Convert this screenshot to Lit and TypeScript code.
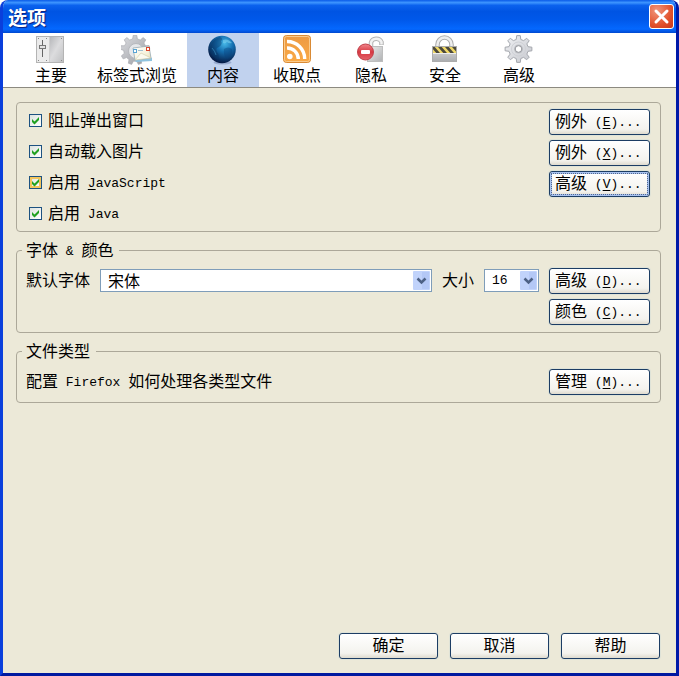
import { LitElement, html, css, svg, nothing } from "lit";
import { customElement, property, state } from "lit/decorators.js";
import { classMap } from "lit/directives/class-map.js";

const gear = (cx: number, cy: number, outer: number, inner: number, teeth: number) => {
  const pts: string[] = [];
  const step = (Math.PI * 2) / teeth;
  for (let i = 0; i < teeth; i++) {
    const a = i * step - Math.PI / 2;
    for (const [r, o] of [[inner, -0.3], [outer, -0.17], [outer, 0.17], [inner, 0.3]]) {
      pts.push(`${(cx + r * Math.cos(a + o * step)).toFixed(2)},${(cy + r * Math.sin(a + o * step)).toFixed(2)}`);
    }
  }
  return pts.join(" ");
};

const icons: Record<string, unknown> = {
  main: svg`
    <defs><linearGradient id="m" x1="0" y1="0" x2="1" y2="1">
      <stop offset="0" stop-color="#b4b5b8"/><stop offset=".5" stop-color="#dcdcde"/><stop offset="1" stop-color="#c0c1c3"/>
    </linearGradient></defs>
    <rect x="1.500" y="1.500" width="27" height="26" fill="#ebebeb" stroke="#b4b4b4"/>
    <rect x="14" y="2" width="14" height="25" fill="url(#m)"/>
    <path d="M14.500 2V27" stroke="#cfcfcf"/>
    <path d="M7.500 5V22" stroke="#666"/>
    <rect x="4.500" y="10.500" width="6" height="3" fill="#e2e2e2" stroke="#777"/>
    <path d="M3 3.500h1M3 25.500h1M11 3.500h1M11 25.500h1M26 3.500h1M26 25.500h1" stroke="#888"/>`,
  tabs: svg`
    <defs><linearGradient id="t" x1="0" y1="0" x2="1" y2="1">
      <stop offset="0" stop-color="#dcdde1"/><stop offset="1" stop-color="#989aa0"/>
    </linearGradient>
    <linearGradient id="e" x1="0" y1="0" x2="1" y2="1">
      <stop offset="0" stop-color="#ffffff"/><stop offset=".6" stop-color="#f6f3de"/><stop offset="1" stop-color="#e6dfb4"/>
    </linearGradient></defs>
    <polygon points=${gear(14, 15, 14.8, 11.3, 9)} fill="url(#t)" stroke="#aaacb1" stroke-width=".7"/>
    <circle cx="15" cy="16" r="7.500" fill="#e6e8eb" stroke="#b6b8bd"/>
    <path d="M13 24L29 22L31 23V26L15 27Z" fill="#8fc3df"/>
    <path d="M12 13L28 11L30 23L14 25Z" fill="url(#e)" stroke="#98a9b3" stroke-width=".8"/>
    <path d="M14 25L20 18L30 23Z" fill="#fbfaf0" stroke="#cfcaa8" stroke-width=".6"/>
    <rect x="25.500" y="12.500" width="3" height="3" fill="#fff" stroke="#d8452e"/>
    <rect x="12.500" y="14.500" width="3" height="3" fill="#fff" stroke="#58a4d4"/>
    <path d="M17 15.500H22" stroke="#9dbfd2"/>`,
  content: svg`
    <defs><radialGradient id="g" cx=".6" cy=".28" r=".75">
      <stop offset="0" stop-color="#46b8e8"/><stop offset=".4" stop-color="#156fb0"/><stop offset="1" stop-color="#04143c"/>
    </radialGradient></defs>
    <ellipse cx="15.500" cy="27.500" rx="9" ry="2" fill="#7d93bd" opacity=".6"/>
    <circle cx="15" cy="14.500" r="13.800" fill="url(#g)"/>
    <path d="M4 10Q7 3 13 2Q17 4 14 6Q16 9 12 12Q8 13 10 17Q13 20 11 25Q4 22 3 15Z" fill="#083463" opacity=".4"/>
    <path d="M17 14Q21 11 25 14Q26 20 20 24Q16 20 17 14Z" fill="#0b427a" opacity=".4"/>
    <path d="M16 5Q21 3 25 8Q22 9 20 7Q18 9 16 8Z" fill="#7fd6f2" opacity=".55"/>
    <path d="M5 13Q8 16 9 20" stroke="#52b3e4" fill="none" opacity=".45"/>`,
  feeds: svg`
    <defs><linearGradient id="f" x1="0" y1="0" x2="0" y2="1">
      <stop offset="0" stop-color="#ed9a42"/><stop offset="1" stop-color="#faa945"/>
    </linearGradient></defs>
    <rect x="2.500" y=".5" width="27" height="27" rx="3" fill="url(#f)" stroke="#d98a35"/>
    <rect x="3.500" y="1.500" width="25" height="25" rx="2" fill="none" stroke="#fbcb8c"/>
    <circle cx="8.800" cy="21.500" r="2.800" fill="#fff"/>
    <path d="M6 13A11 11 0 0 1 17.300 24M6 6.500A17.500 17.500 0 0 1 23.700 24" fill="none" stroke="#fff" stroke-width="3.400"/>`,
  privacy: svg`
    <defs><linearGradient id="p" x1="0" y1="0" x2="1" y2="1">
      <stop offset="0" stop-color="#efefef"/><stop offset="1" stop-color="#afb1b3"/>
    </linearGradient>
    <linearGradient id="r" x1="0" y1="0" x2="0" y2="1">
      <stop offset="0" stop-color="#f0868b"/><stop offset=".5" stop-color="#d73842"/><stop offset="1" stop-color="#e4636a"/>
    </linearGradient></defs>
    <path d="M16 11V7.500A5.500 5 0 0 1 26.500 7V10" fill="none" stroke="#b4b4b4" stroke-width="4.500"/>
    <path d="M16 11V7.500A5.500 5 0 0 1 26.500 7V9.500" fill="none" stroke="#f2f2f2" stroke-width="2.500"/>
    <rect x="12.500" y="11.500" width="15" height="15" fill="url(#p)" stroke="#bdbdbd"/>
    <circle cx="10.500" cy="17" r="8" fill="url(#r)" stroke="#c1414a"/>
    <rect x="6" y="15" width="9" height="4" rx="1" fill="#fff"/>`,
  security: svg`
    <defs><linearGradient id="s" x1="0" y1="0" x2="0" y2="1">
      <stop offset="0" stop-color="#dedede"/><stop offset="1" stop-color="#aaacaf"/>
    </linearGradient><clipPath id="c"><rect x="4" y="12" width="23" height="6"/></clipPath></defs>
    <path d="M8.500 11V9.500A7 7 0 0 1 22.500 9.500V11" fill="none" stroke="#adadad" stroke-width="4.500"/>
    <path d="M8.500 11V9.500A7 7 0 0 1 22.500 9.500V11" fill="none" stroke="#eeeeee" stroke-width="2.500"/>
    <rect x="3.500" y="11.500" width="24" height="15" fill="url(#s)" stroke="#acacac"/>
    <g clip-path="url(#c)"><rect x="4" y="12" width="23" height="6" fill="#f0d968"/>
      <path d="M3 11L10 19M10 11L17 19M17 11L24 19M24 11L31 19" stroke="#4c493c" stroke-width="2.800"/></g>
    <path d="M4 18.500H27" stroke="#ededed"/>`,
  advanced: svg`
    <defs><linearGradient id="a" x1="0" y1="0" x2="1" y2="1">
      <stop offset="0" stop-color="#f0f1f4"/><stop offset="1" stop-color="#c6c8ce"/>
    </linearGradient></defs>
    <polygon points=${gear(15.5, 14, 13.5, 9.8, 8)} fill="url(#a)" stroke="#a4a7ad" stroke-linejoin="round"/>
    <circle cx="15.500" cy="14" r="7" fill="none" stroke="#cfd1d6"/>
    <circle cx="15.500" cy="14" r="4.500" fill="#bfc1c6"/>
    <circle cx="15.500" cy="14" r="3.300" fill="#fff" stroke="#97999f"/>`,
};

const textStyles = css`
  .en {
    font-family: "Liberation Mono", "Noto Sans CJK SC", monospace;
    font-size: 13px;
    line-height: 0;
    vertical-align: 1px;
    white-space: pre;
  }
  .key {
    text-decoration: underline;
    text-underline-offset: 2px;
  }
`;

@customElement("xp-button")
class XpButton extends LitElement {
  @property() label = "";
  @property() key = "";
  @property({ type: Boolean }) active = false;

  static styles = [
    textStyles,
    css`
      :host {
        display: block;
        width: 101px;
      }
      button {
        display: block;
        width: 100%;
        height: 26px;
        padding: 0 5px 4px;
        border: 1px solid #1c3d64;
        border-radius: 3px;
        background: linear-gradient(#ffffff, #f4f3ee 80%, #dfdbcf);
        box-shadow: 0 0 0 1px #dfe3d8;
        color: #000;
        font: 16px/20px "Noto Sans CJK SC", sans-serif;
        text-align: left;
        white-space: nowrap;
      }
      .plain {
        text-align: center;
      }
      .active {
        box-shadow: inset 0 0 0 2px #a9c3f0, 0 0 0 1px #dfe3d8;
        outline: 1px dotted #52688f;
        outline-offset: -3px;
      }
    `,
  ];

  render() {
    return html`<button type="button" class=${classMap({ active: this.active, plain: !this.key })}>${this.label}${
      this.key ? html`<span class="en"> (<span class="key">${this.key}</span>)...</span>` : nothing
    }</button>`;
  }
}

@customElement("xp-check")
class XpCheck extends LitElement {
  @property() label = "";
  @property() key = "";
  @property() rest = "";
  @property({ type: Boolean }) hot = false;

  static styles = [
    textStyles,
    css`
      label {
        display: flex;
        align-items: center;
        gap: 6px;
        padding-bottom: 2px;
        line-height: 20px;
      }
      .box {
        display: grid;
      }
      .text {
        padding-bottom: 3px;
      }
      input,
      svg {
        grid-area: 1 / 1;
        width: 13px;
        height: 13px;
        margin: 0;
      }
      input {
        appearance: none;
        box-sizing: border-box;
        border: 1px solid #1d5281;
        background: linear-gradient(135deg, #dde3df, #ffffff);
      }
      .hot {
        box-shadow: inset 0 0 0 2px #f3c55c;
      }
      svg {
        pointer-events: none;
        visibility: hidden;
      }
      input:checked + svg {
        visibility: visible;
      }
    `,
  ];

  render() {
    return html`<label>
      <span class="box">
        <input type="checkbox" class=${classMap({ hot: this.hot })} checked />
        <svg viewBox="0 0 13 13" aria-hidden="true"><path d="M3 5L5.500 7.500L10 3V6L5.500 10.500L3 8Z" fill="#21a121" /></svg>
      </span>
      <span class="text">${this.label}<span class="en">${this.rest ? " " : ""}<span class="key">${this.key}</span>${this.rest}</span></span>
    </label>`;
  }
}

@customElement("app-root")
class AppRoot extends LitElement {
  @state() private tab = "content";

  static styles = [
    textStyles,
    css`
      :host {
        display: block;
        background: #fff;
        color: #000;
        font: 16px/20px "Noto Sans CJK SC", sans-serif;
      }
      .window {
        box-sizing: border-box;
        min-height: 100vh;
        display: flex;
        flex-direction: column;
        border: 3px solid;
        border-top: 0;
        border-color: #0a3fdc #0019a8 #0019a0 #0a3fdc;
        border-radius: 8px 8px 0 0;
        background: #ece9d8;
        overflow: hidden;
      }
      .title {
        display: flex;
        align-items: center;
        justify-content: space-between;
        height: 33px;
        margin: 0 -3px;
        padding: 0 5px 0 8px;
        box-sizing: border-box;
        background: linear-gradient(#0a5be8, #3d95ff 8%, #0b62ee 16%, #0054e3 35%, #0058ea 60%, #0468ff 88%, #0359e8 94%, #0048cf);
      }
      h1 {
        margin: 0;
        color: #fff;
        font-size: 19px;
        font-weight: 700;
        text-shadow: 1px 1px 1px #0a1f7c;
      }
      .close {
        width: 25px;
        height: 25px;
        padding: 0;
        border: 1px solid #fff;
        border-radius: 3px;
        background: radial-gradient(circle at 30% 25%, #f0967c, #e2522c 60%, #c8381a);
      }
      .close svg {
        display: block;
      }
      nav {
        display: flex;
        gap: 2px;
        padding-left: 12px;
        background: #fff;
        border-bottom: 1px solid #8c8a80;
      }
      .tab {
        display: flex;
        flex-direction: column;
        align-items: center;
        min-width: 72px;
        height: 54px;
        padding: 2px 8px;
        border: 0;
        background: none;
        color: inherit;
        font: inherit;
      }
      .tab svg {
        width: 32px;
        height: 30px;
        flex: none;
      }
      .tab span {
        line-height: 18px;
      }
      .tab.on {
        background: #c1d2ee;
      }
      main {
        flex: 1;
        display: flex;
        flex-direction: column;
        gap: 8px;
        padding: 14px 15px 14px 13px;
      }
      fieldset {
        min-width: 0;
        margin: 0;
        padding: 5px 10px 5px 5px;
        border: 1px solid #aca899;
        border-radius: 4px;
      }
      .checks {
        padding: 3px 10px 1px 12px;
      }
      legend {
        height: 20px;
        padding: 0 6px 0 4px;
        line-height: 18px;
      }
      .row {
        display: flex;
        align-items: center;
        justify-content: space-between;
        gap: 10px;
        height: 31px;
      }
      .fonts .row,
      .types .row {
        padding-left: 4px;
      }
      .row > label,
      .row > span:first-child {
        padding-bottom: 3px;
      }
      .end {
        justify-content: flex-end;
      }
      .pick {
        display: grid;
        align-items: center;
      }
      .wide {
        flex: 1;
      }
      .size {
        width: 55px;
      }
      select {
        grid-area: 1 / 1;
        appearance: none;
        box-sizing: border-box;
        width: 100%;
        height: 23px;
        margin: 0;
        padding: 0 20px 2px 7px;
        border: 1px solid #7f9db9;
        border-radius: 0;
        background: #fff;
        color: #000;
        font: 16px/20px "Noto Sans CJK SC", sans-serif;
      }
      .size select {
        padding-bottom: 0;
        font-family: "Liberation Mono", monospace;
        font-size: 13px;
      }
      .pick svg {
        grid-area: 1 / 1;
        justify-self: end;
        margin-right: 2px;
        width: 17px;
        height: 19px;
        pointer-events: none;
      }
      footer {
        display: flex;
        justify-content: flex-end;
        gap: 12px;
        margin-top: auto;
        padding-right: 1px;
      }
      footer xp-button {
        width: 99px;
      }
    `,
  ];

  private tabs = [
    ["main", "主要"],
    ["tabs", "标签式浏览"],
    ["content", "内容"],
    ["feeds", "收取点"],
    ["privacy", "隐私"],
    ["security", "安全"],
    ["advanced", "高级"],
  ];

  private arrow() {
    return html`<svg viewBox="0 0 17 19" aria-hidden="true">
      <rect width="17" height="19" rx="1" fill="#c1d3fb" />
      <rect x="9" y="1" width="7" height="17" fill="#b4c8f6" />
      <path d="M4.500 7.500L8.500 11.500L12.500 7.500" fill="none" stroke="#4d6185" stroke-width="2.500" />
    </svg>`;
  }

  render() {
    return html`<div class="window">
      <header class="title">
        <h1>选项</h1>
        <button class="close" type="button" aria-label="关闭">
          <svg viewBox="0 0 23 23"><path d="M6 6L17 17M17 6L6 17" stroke="#fff" stroke-width="3" stroke-linecap="round" /></svg>
        </button>
      </header>
      <nav>
        ${this.tabs.map(
          ([id, label]) => html`<button
            type="button"
            class=${classMap({ tab: true, on: this.tab === id })}
            @click=${() => (this.tab = id)}
          ><svg viewBox="0 0 32 30" aria-hidden="true">${icons[id]}</svg><span>${label}</span></button>`
        )}
      </nav>
      <main>
        <fieldset class="checks" aria-label="内容">
          <div class="row"><xp-check label="阻止弹出窗口"></xp-check><xp-button label="例外" key="E"></xp-button></div>
          <div class="row"><xp-check label="自动载入图片"></xp-check><xp-button label="例外" key="X"></xp-button></div>
          <div class="row"><xp-check label="启用" key="J" rest="avaScript" hot></xp-check><xp-button label="高级" key="V" active></xp-button></div>
          <div class="row"><xp-check label="启用" rest="Java"></xp-check></div>
        </fieldset>
        <fieldset class="fonts">
          <legend>字体<span class="en"> &amp; </span>颜色</legend>
          <div class="row">
            <label for="font">默认字体</label>
            <span class="pick wide"><select id="font"><option>宋体</option></select>${this.arrow()}</span>
            <label for="size">大小</label>
            <span class="pick size"><select id="size"><option>16</option></select>${this.arrow()}</span>
            <xp-button label="高级" key="D"></xp-button>
          </div>
          <div class="row end"><xp-button label="颜色" key="C"></xp-button></div>
        </fieldset>
        <fieldset class="types">
          <legend>文件类型</legend>
          <div class="row">
            <span>配置<span class="en"> Firefox </span>如何处理各类型文件</span>
            <xp-button label="管理" key="M"></xp-button>
          </div>
        </fieldset>
        <footer>
          <xp-button label="确定"></xp-button>
          <xp-button label="取消"></xp-button>
          <xp-button label="帮助"></xp-button>
        </footer>
      </main>
    </div>`;
  }
}
